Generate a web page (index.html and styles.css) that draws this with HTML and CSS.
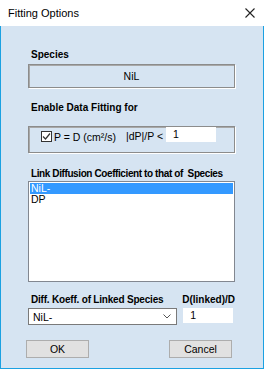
FILE: index.html
```html
<!DOCTYPE html>
<html lang="en">
<head>
    <meta charset="UTF-8">
    <title>Fitting Options</title>
    <link rel="stylesheet" href="styles.css">
</head>
<body>
    <div class="window">
        <div class="titlebar">
            <span class="title">Fitting Options</span>
            <svg class="close" width="10" height="10" viewBox="0 0 10 10">
                <path d="M0.5 0.5 L9.5 9.5 M9.5 0.5 L0.5 9.5" stroke="#222" stroke-width="1.1" fill="none"/>
            </svg>
        </div>
        <div class="content">
            <div class="label species-label">Species</div>
            <div class="static-box">NiL</div>

            <div class="label fit-label">Enable Data Fitting for</div>
            <div class="group-box">
                <label class="check">
                    <span class="checkbox">
                        <svg width="9" height="9" viewBox="0 0 9 9">
                            <path d="M1 4.5 L3.5 7 L8 1.5" stroke="#333" stroke-width="1.2" fill="none"/>
                        </svg>
                    </span>
                    P = D (cm²/s)
                </label>
                <span class="limit">|dP|/P &lt;</span>
                <span class="field limit-field">1</span>
            </div>

            <div class="label link-label">Link Diffusion Coefficient to that of&nbsp; Species</div>
            <div class="listbox">
                <div class="item selected">NiL-</div>
                <div class="item">DP</div>
            </div>

            <div class="linked-row">
                <div class="linked-col">
                    <div class="label diff-label">Diff. Koeff. of Linked Species</div>
                    <div class="combo">
                        <span>NiL-</span>
                        <svg width="8" height="5" viewBox="0 0 8 5">
                            <path d="M0.5 0.5 L4 4 L7.5 0.5" stroke="#555" stroke-width="1" fill="none"/>
                        </svg>
                    </div>
                </div>
                <div class="ratio-col">
                    <div class="label">D(linked)/D</div>
                    <span class="field ratio-field">1</span>
                </div>
            </div>

            <div class="buttons">
                <button class="btn">OK</button>
                <button class="btn">Cancel</button>
            </div>
        </div>
    </div>
</body>
</html>
```

FILE: styles.css
```css
* {
    margin: 0;
    padding: 0;
    box-sizing: border-box;
}

body {
    font-family: 'Liberation Sans', Arial, sans-serif;
    font-size: 10.5px;
    color: #000;
    width: 264px;
    height: 369px;
    overflow: hidden;
}

.window {
    width: 264px;
    height: 369px;
    background: #d6e4f2;
    border: 1px solid #1ba1e2;
    border-top: none;
    display: flex;
    flex-direction: column;
}

.titlebar {
    height: 26px;
    background: #fff;
    margin: 0 -1px;
    display: flex;
    align-items: center;
    justify-content: space-between;
    padding: 0 9px 0 8px;
}

.title {
    font-family: 'Liberation Sans', Arial, sans-serif;
    font-size: 11px;
    color: #000;
}

.content {
    padding: 0 28px 0 27px;
    display: flex;
    flex-direction: column;
}

.label {
    font-weight: bold;
    font-size: 10px;
    line-height: 13px;
    height: 13px;
    white-space: nowrap;
    padding-left: 3px;
}

.species-label {
    margin-top: 22px;
    margin-bottom: 3px;
}

.static-box {
    height: 24px;
    border: 1px solid #8c8c8c;
    box-shadow: inset 1px 1px 0 #a8a8a8, 1px 1px 0 #fff;
    display: flex;
    align-items: center;
    justify-content: center;
}

.fit-label {
    margin-top: 13px;
    margin-bottom: 12px;
}

.group-box {
    height: 27px;
    border: 1px solid #8c8c8c;
    box-shadow: inset 1px 1px 0 #a8a8a8, 1px 1px 0 #fff;
    display: flex;
    align-items: flex-start;
    padding: 3px 0 0 12px;
}

.check {
    display: flex;
    align-items: center;
    gap: 2px;
    width: 85px;
    height: 13px;
}

.checkbox {
    width: 11px;
    height: 11px;
    border: 1px solid #333;
    background: #fff;
    display: flex;
    align-items: center;
    justify-content: center;
}

.limit {
    width: 40px;
    line-height: 13px;
}

.field {
    background: #fff;
    height: 16px;
    line-height: 16px;
    padding-left: 7px;
}

.limit-field {
    width: 50px;
    height: 15px;
    line-height: 15px;
    margin-top: -3px;
}

.link-label {
    margin-top: 14px;
    letter-spacing: -0.4px;
}

.diff-label {
    letter-spacing: -0.2px;
}

.listbox {
    margin-top: 1px;
    height: 101px;
    background: #fff;
    border: 1px solid #828790;
    padding: 1px;
}

.item {
    height: 11px;
    line-height: 11px;
    padding-left: 1px;
}

.item.selected {
    background: #3399ff;
    color: #fff;
}

.linked-row {
    margin-top: 11px;
    display: flex;
    gap: 5px;
}

.linked-col {
    width: 150px;
    display: flex;
    flex-direction: column;
    gap: 2px;
}

.combo {
    height: 17px;
    background: #fff;
    border: 1px solid #7a7a7a;
    display: flex;
    align-items: center;
    justify-content: space-between;
    padding: 0 5px 0 4px;
}

.ratio-col {
    display: flex;
    flex-direction: column;
    gap: 2px;
}

.ratio-col .label {
    padding-left: 0;
}

.ratio-field {
    width: 50px;
    height: 15px;
    line-height: 15px;
    margin-left: 1px;
}

.buttons {
    margin: 15px 3px 0 -2px;
    display: flex;
    justify-content: space-between;
}

.btn {
    width: 63px;
    height: 18px;
    background: #e1e1e1;
    border: 1px solid #adadad;
    font-family: 'Liberation Sans', Arial, sans-serif;
    font-size: 10.5px;
    color: #000;
}
```
